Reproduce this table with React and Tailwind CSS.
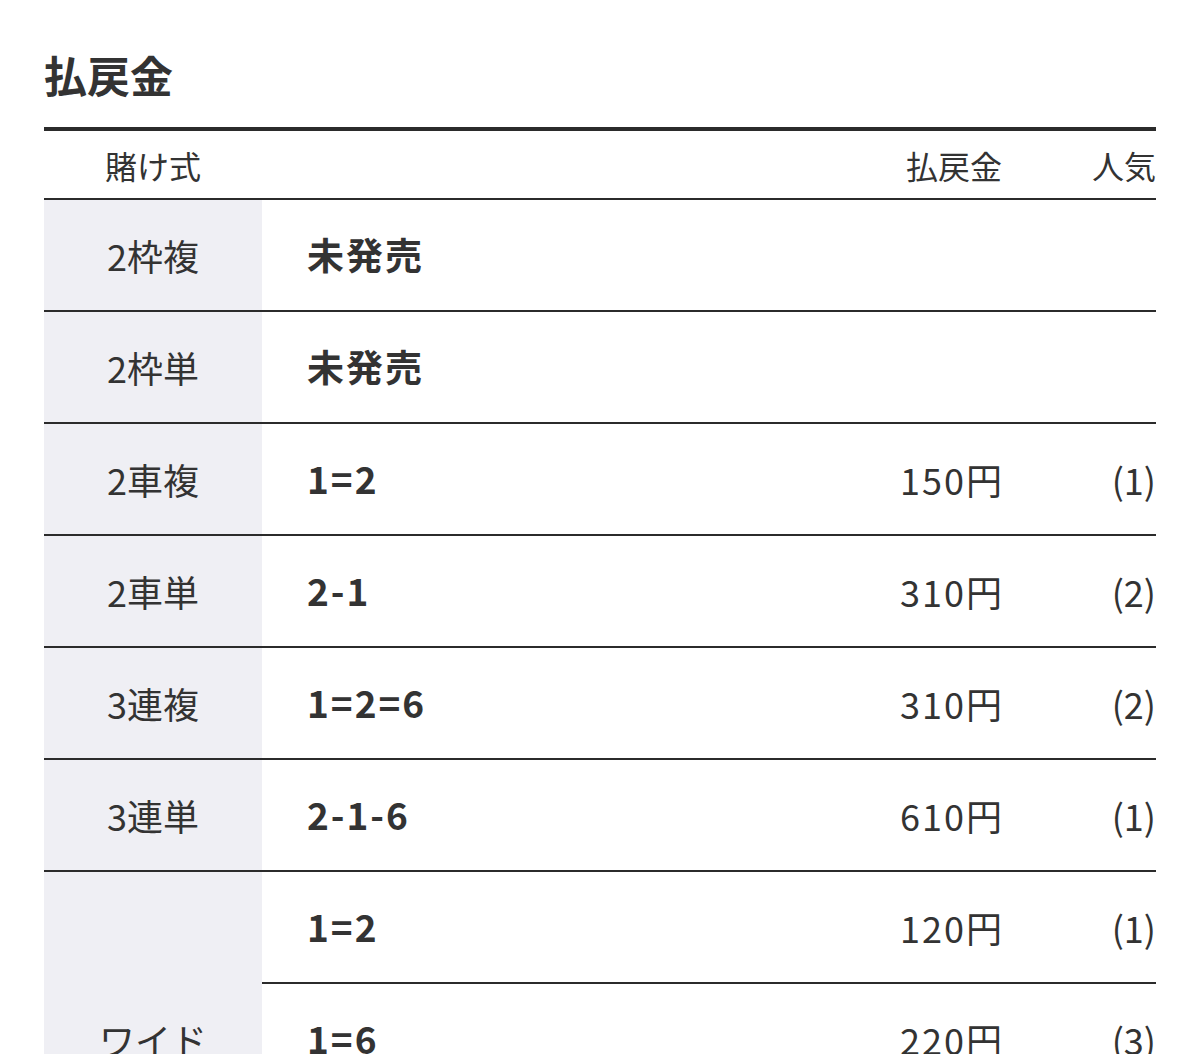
const groups = [
  { label: "2枠複", rows: [{ combo: "未発売", pay: "", pop: "" }] },
  { label: "2枠単", rows: [{ combo: "未発売", pay: "", pop: "" }] },
  { label: "2車複", rows: [{ combo: "1=2", pay: "150円", pop: "(1)" }] },
  { label: "2車単", rows: [{ combo: "2-1", pay: "310円", pop: "(2)" }] },
  { label: "3連複", rows: [{ combo: "1=2=6", pay: "310円", pop: "(2)" }] },
  { label: "3連単", rows: [{ combo: "2-1-6", pay: "610円", pop: "(1)" }] },
  {
    label: "ワイド",
    rows: [
      { combo: "1=2", pay: "120円", pop: "(1)" },
      { combo: "1=6", pay: "220円", pop: "(3)" },
      { combo: "2=6", pay: "190円", pop: "(2)" },
    ],
  },
];

const PayRow = ({ row, last }) => (
  <div
    className={`flex h-[110px] box-content items-center ${
      last ? "" : "border-b-2 border-[#2b2b2b]"
    }`}
  >
    <div className="flex-1 pl-[45px] text-[37px] font-bold tracking-[2px]">
      {row.combo}
    </div>
    <div className="w-[200px] text-right text-[36px] tracking-[2px]">
      {row.pay}
    </div>
    <div className="w-[152px] text-right text-[36px]">{row.pop}</div>
  </div>
);

export default function App() {
  return (
    <div
      className="min-h-screen bg-white px-[44px] pt-[46px] text-[#333]"
      style={{ fontFamily: '"Noto Sans CJK JP", sans-serif' }}
    >
      <h2 className="text-[43px] font-bold leading-[56px]">払戻金</h2>

      <div className="mt-[25px] border-t-4 border-[#2b2b2b]">
        <div className="flex h-[69px] items-center border-b-2 border-[#2b2b2b] text-[32px]">
          <div className="w-[218px] text-center">賭け式</div>
          <div className="flex-1" />
          <div className="w-[200px] text-right">払戻金</div>
          <div className="w-[154px] text-right">人気</div>
        </div>

        {groups.map((g) => (
          <div key={g.label} className="flex border-b-2 border-[#2b2b2b]">
            <div className="flex w-[218px] items-center justify-center bg-[#efeff4] text-[36px]">
              {g.label}
            </div>
            <div className="flex-1">
              {g.rows.map((r, i) => (
                <PayRow key={i} row={r} last={i === g.rows.length - 1} />
              ))}
            </div>
          </div>
        ))}
      </div>
    </div>
  );
}
